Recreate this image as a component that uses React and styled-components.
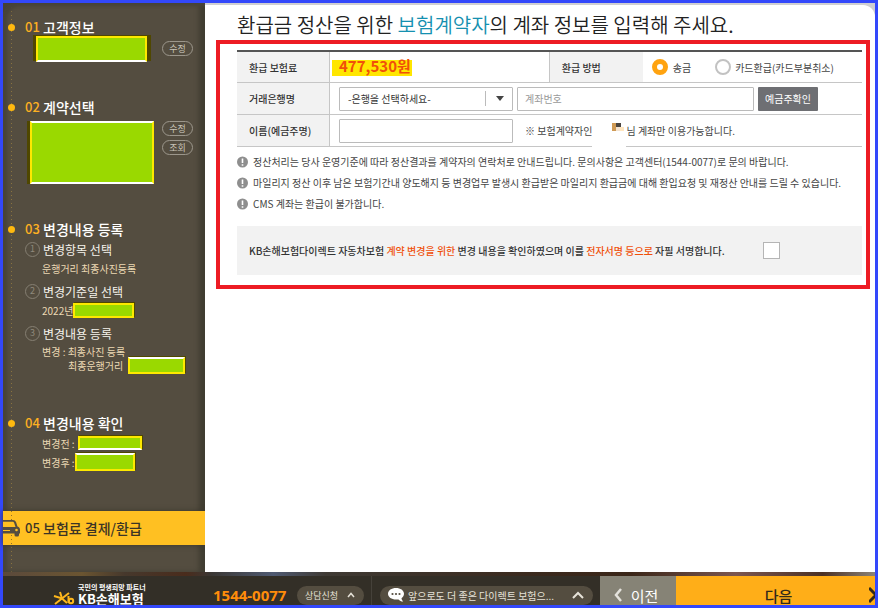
import React, { useState } from "react";
import styled, { createGlobalStyle } from "styled-components";

const GlobalStyle = createGlobalStyle`
  * {
    box-sizing: border-box;
  }
  body {
    margin: 0;
    font-family: "Noto Sans CJK KR", "Noto Sans", sans-serif;
    font-size: 10px;
    color: #444;
  }
  h1, h2, p, ol, ul {
    margin: 0;
    padding: 0;
  }
  ol, ul {
    list-style: none;
  }
  button, input, select {
    font-family: inherit;
    margin: 0;
  }
`;

const Page = styled.div`
  display: flex;
  flex-direction: column;
  min-height: 100vh;
  border: 3px solid #3348fb;
  background: #47423a;
`;

const Body = styled.div`
  display: flex;
  flex: 1;
`;

/* ---------- sidebar ---------- */

const Sidebar = styled.aside`
  flex: none;
  width: 202px;
  background: #454136;
`;

const SidebarInner = styled.div`
  height: 100%;
  padding-top: 15px;
  border-radius: 14px 0 0 0;
  background:
    repeating-linear-gradient(#8a7440 0 1px, transparent 1px 4px) 8px 0 / 1px 100% no-repeat,
    #544d40;
  box-shadow: inset 4px 3px 3px #48443a, inset -6px 0 5px #413d31;
`;

const Step = styled.li`
  display: grid;
  grid-template-columns: 7px 1fr;
  column-gap: 10px;
  padding: 0 12px ${(props) => props.$space}px 5px;
`;

const Bullet = styled.span`
  width: 7px;
  height: 7px;
  margin-top: 6px;
  border-radius: 50%;
  background: #ffb90f;
`;

const StepTitle = styled.h2`
  display: grid;
  grid-template-columns: 18px 1fr;
  font-size: 14px;
  font-weight: 500;
  line-height: 18px;
  color: ${(props) => (props.$active ? "#3b3426" : "#fff")};
`;

const StepNumber = styled.span`
  font-size: 13px;
  color: ${(props) => (props.$active ? "#3b3426" : "#fdb022")};
`;

const StepBody = styled.div`
  display: flex;
  justify-content: space-between;
  padding-top: ${(props) => props.$top}px;
  padding-left: ${(props) => props.$left}px;
`;

const Masked = styled.span`
  flex: none;
  width: ${(props) => props.$w}px;
  height: ${(props) => props.$h}px;
  border: 2px solid;
  border-color: ${(props) => props.$edge || "#fde800"};
  background: #9ad900;
  box-shadow: ${(props) => props.$shade || "1px -1px 0 #4f4700"};
`;

const Chips = styled.div`
  display: flex;
  flex-direction: column;
  gap: 4px;
  padding-top: ${(props) => props.$top || 0}px;
`;

const Chip = styled.button`
  width: 31px;
  height: 15px;
  padding: 0;
  border: 1px solid #9c978c;
  border-radius: 8px;
  background: transparent;
  font-size: 9px;
  line-height: 12px;
  color: #c9c4b8;
`;

const SubSteps = styled.ol`
  display: flex;
  flex-direction: column;
  gap: 8px;
  padding-top: 4px;
`;

const SubTitle = styled.p`
  display: grid;
  grid-template-columns: 15px 1fr;
  column-gap: 3px;
  margin-bottom: 2px;
  font-size: 12px;
  line-height: 16px;
  color: #f6f3ec;
`;

const SubNumber = styled.span`
  height: 15px;
  border: 1px solid #857f72;
  border-radius: 50%;
  font-size: 9px;
  line-height: 12px;
  text-align: center;
  color: #8f897c;
`;

const Detail = styled.p`
  display: flex;
  align-items: center;
  gap: ${(props) => props.$gap || 0}px;
  height: ${(props) => props.$h || 16}px;
  padding-left: ${(props) => props.$left || 17}px;
  white-space: nowrap;
  color: #ecd9b4;
`;

const Details = styled.div`
  display: flex;
  flex-direction: column;
  gap: 3px;
  padding-top: 3px;
`;

const ActiveStep = styled.li`
  display: grid;
  grid-template-columns: 17px 1fr;
  column-gap: 5px;
  align-items: center;
  height: 34px;
  background:
    repeating-linear-gradient(#8f6f2a 0 1px, transparent 1px 4px) 8px 0 / 1px 100% no-repeat,
    #ffc022;
  box-shadow: 0 0 5px #3a362c;
`;

/* ---------- main ---------- */

const MainArea = styled.div`
  flex: 1;
  min-width: 0;
  padding-top: 2px;
  background: #cfcfd1;
`;

const Main = styled.main`
  height: 100%;
  padding: 5px 5px 0 11px;
  border-radius: 0 12px 0 0;
  background: #fff;
`;

const Title = styled.h1`
  padding-left: 21px;
  font-size: 20px;
  font-weight: 350;
  line-height: 30px;
  white-space: nowrap;
  color: #222;
`;

const TitleAccent = styled.span`
  color: #1590b0;
`;

const Frame = styled.form`
  padding: 6px 4px 10px 17px;
  border: 4px solid #ed1c24;
`;

const Table = styled.table`
  width: 100%;
  border-top: 2px solid #555;
  border-spacing: 0;
  table-layout: fixed;
`;

const HeadCell = styled.th`
  padding: 0 0 0 12px;
  border-bottom: 1px solid #c6c6c6;
  border-right: ${(props) => (props.$divided ? "0" : "1px solid #c6c6c6")};
  border-left: ${(props) => (props.$divided ? "1px solid #c6c6c6" : "0")};
  background: #f2f2f2;
  font-weight: 500;
  text-align: left;
  color: #333;
`;

const Cell = styled.td`
  padding: 0 0 0 ${(props) => (props.$flush ? 2 : 9)}px;
  border-bottom: 1px solid #c6c6c6;
`;

const Field = styled.div`
  display: flex;
  align-items: center;
  gap: 4px;
  height: ${(props) => props.$h || 31}px;
  padding-right: ${(props) => props.$right || 0}px;
`;

const Amount = styled.strong`
  display: block;
  width: fit-content;
  margin-bottom: 2px;
  padding: 0 1px 0 7px;
  background: linear-gradient(transparent 5px, #ffe600 5px 21px, transparent 21px);
  font-size: 15px;
  font-weight: 700;
  line-height: 22px;
  color: #f0500a;
`;

const RadioLabel = styled.label`
  display: flex;
  align-items: center;
  gap: ${(props) => props.$gap || 5}px;
  margin-right: 20px;
  white-space: nowrap;
  color: #444;
`;

const Radio = styled.input`
  appearance: none;
  width: 16px;
  height: 16px;
  border: 2px solid #c2c2c2;
  border-radius: 50%;
  background: #fff;

  &:checked {
    border: 5px solid #ffa310;
  }
`;

const SelectWrap = styled.div`
  display: grid;
  grid-template-columns: 1fr 28px;
  flex: none;
  width: 174px;
`;

const Select = styled.select`
  grid-area: 1 / 1 / 2 / 3;
  appearance: none;
  width: 100%;
  height: 24px;
  padding: 0 8px;
  border: 1px solid #bbb;
  border-radius: 1px;
  background: #fff;
  font-size: 10px;
  color: #333;
`;

const SelectArrow = styled.span`
  grid-area: 1 / 2 / 2 / 3;
  align-self: center;
  display: flex;
  align-items: center;
  justify-content: center;
  height: 15px;
  border-left: 1px solid #bbb;
  pointer-events: none;
`;

const TextInput = styled.input`
  flex: ${(props) => (props.$wide ? "1" : "none")};
  width: 174px;
  min-width: 0;
  height: 24px;
  padding: 0 7px;
  border: 1px solid #bbb;
  border-radius: 1px;
  font-size: 10px;
  color: #333;

  &::placeholder {
    color: #999;
  }
`;

const CheckButton = styled.button`
  flex: none;
  width: 60px;
  height: 24px;
  padding: 0;
  border: 0;
  border-radius: 1px;
  background: #6e6f73;
  font-size: 10px;
  color: #fff;
`;

const Note = styled.p`
  display: flex;
  align-items: center;
  height: 31px;
  padding-left: 8px;
  white-space: nowrap;
`;

/* runs over the row line on purpose, the name is blanked out down to it */
const NameMask = styled.span`
  display: flex;
  justify-content: flex-end;
  width: 34px;
  height: 33px;
  margin-bottom: -2px;
  padding: 8px 2px 0 0;
  background: #fff;
`;

const Notices = styled.ul`
  padding: 4px 0 12px;
`;

const Notice = styled.li`
  display: flex;
  align-items: center;
  gap: 5px;
  height: 21px;
  white-space: nowrap;
  color: #444;
`;

const Agreement = styled.div`
  display: flex;
  align-items: center;
  gap: 38px;
  height: 49px;
  padding-left: 12px;
  background: #f2f2f2;
  font-weight: 500;
  white-space: nowrap;
  color: #333;
`;

const Point = styled.span`
  color: #f0500a;
`;

const Checkbox = styled.input`
  appearance: none;
  width: 17px;
  height: 17px;
  border: 1px solid #b5b5b5;
  background: #fff;

  &:checked {
    background: #ffa310;
  }
`;

/* ---------- footer ---------- */

const Footer = styled.footer`
  height: 33px;
  overflow: hidden;
  background: #332f27;
`;

const PhotoStrip = styled.div`
  height: 4px;
  background: linear-gradient(
    90deg, #5b4a3c, #6b5531 9%, #46382c 14%, #4a2c1c 21%, #3b3835 24%,
    #4f5a72 31%, #3f3a34 37%, #3b2a1e 60%, #3a2618 72%, #7c5650 84%, #4b3024 94%, #8c8378
  );
`;

const FooterRow = styled.div`
  display: flex;
  align-items: center;
  height: 38px;
`;

const Logo = styled.a`
  display: grid;
  grid-template-columns: 23px auto;
  column-gap: 2px;
  flex: none;
  width: 202px;
  padding-left: 50px;
  text-decoration: none;
  color: #fff;
`;

const LogoText = styled.span`
  display: flex;
  flex-direction: column;
  font-size: 13px;
  font-weight: 700;
  line-height: 16px;
`;

const LogoTagline = styled.span`
  font-size: 7px;
  line-height: 8px;
`;

const Phone = styled.a`
  width: 92px;
  padding-left: 8px;
  font-family: "Noto Sans", sans-serif;
  font-size: 15px;
  font-weight: 700;
  text-decoration: none;
  color: #ff8d0a;
`;

const Pill = styled.button`
  display: flex;
  align-items: center;
  gap: 4px;
  flex: none;
  width: ${(props) => props.$w}px;
  height: 19px;
  padding: 0 9px 0 8px;
  border: 0;
  border-radius: 10px;
  background: #544d40;
  font-size: ${(props) => props.$size}px;
  white-space: nowrap;
  color: #e6e2d8;
`;

const PillText = styled.span`
  flex: 1;
  text-align: left;
`;

const Divider = styled.span`
  width: 1px;
  height: 38px;
  margin: 0 8px 0 7px;
  background: #45413a;
`;

const NavButton = styled.button`
  display: flex;
  align-items: center;
  justify-content: center;
  gap: 8px;
  align-self: stretch;
  border: 0;
  padding: 0;
  font-size: 15px;
`;

const PrevButton = styled(NavButton)`
  width: 76px;
  margin-left: 7px;
  padding-right: 4px;
  background: #868376;
  color: #fff;
`;

const NextButton = styled(NavButton)`
  flex: 1;
  display: grid;
  grid-template-columns: 1fr 6px;
  gap: 0;
  padding-left: 12px;
  background: #ffae18;
  font-weight: 500;
  color: #33291a;
`;

const CarIcon = () => (
  <svg width="17" height="18" viewBox="0 0 17 18" aria-hidden="true">
    <path fill="#544d40" d="M0 1h10q2 0 3 2l1.500 4.500Q17 8 17 11v3.500H0z" />
    <path fill="#ffc022" d="M0 2.800h9.800q.9 0 1.300 1L12.500 8H0z" />
    <rect x="11.500" y="12" width="4.500" height="5.500" rx="1.500" fill="#544d40" />
    <circle cx="13.500" cy="11" r="1.300" fill="#ffc022" />
    <path fill="#ffc022" d="M0 11h7v1H0z" />
  </svg>
);

const AlertIcon = () => (
  <svg width="11" height="12" viewBox="0 0 11 12" aria-hidden="true">
    <circle cx="5.500" cy="6" r="5.500" fill="#8e8e8e" />
    <path d="M5.500 2.500v4.500M5.500 8.200v1.500" stroke="#fff" strokeWidth="1.600" />
  </svg>
);

const Chevron = ({ d, w, h, color, stroke }) => (
  <svg width={w} height={h} viewBox={`0 0 ${w} ${h}`} fill="none" aria-hidden="true">
    <path d={d} stroke={color} strokeWidth={stroke} />
  </svg>
);

const ChatIcon = () => (
  <svg width="16" height="14" viewBox="0 0 16 14" aria-hidden="true">
    <path
      fill="#fff"
      d="M8 0c4.400 0 8 2.400 8 5.800 0 1.800-1 3.400-2.500 4.400.1 1.300.8 2.400 1.700 3.300-2-.1-3.600-.9-4.700-2.100-.8.100-1.600.2-2.500.2-4.400 0-8-2.400-8-5.800S3.600 0 8 0z"
    />
    <circle cx="4.500" cy="6" r="1.100" fill="#544d40" />
    <circle cx="8" cy="6" r="1.100" fill="#544d40" />
    <circle cx="11.500" cy="6" r="1.100" fill="#544d40" />
  </svg>
);

const StarMark = () => (
  <svg width="23" height="24" viewBox="0 0 23 24" fill="none" aria-hidden="true">
    <g stroke="#ffb81c" strokeWidth="2">
      <path d="M1 13 9 15.500 16 10" />
      <path d="M7 9 9 15.500 2 21" />
      <path d="M9 15.500 14 20" />
      <path d="M15.500 13v7" />
      <circle cx="18" cy="18" r="2.200" />
    </g>
  </svg>
);

const NOTICES = [
  "정산처리는 당사 운영기준에 따라 정산결과를 계약자의 연락처로 안내드립니다. 문의사항은 고객센터(1544-0077)로 문의 바랍니다.",
  "마일리지 정산 이후 남은 보험기간내 양도해지 등 변경업무 발생시 환급받은 마일리지 환급금에 대해 환입요청 및 재정산 안내를 드릴 수 있습니다.",
  "CMS 계좌는 환급이 불가합니다.",
];

const Heading = ({ number, children, active }) => (
  <StepTitle $active={active}>
    <StepNumber $active={active}>{number}</StepNumber>
    {children}
  </StepTitle>
);

const StepList = () => (
  <Sidebar>
    <SidebarInner>
      <ol>
        <Step $space={36}>
          <Bullet />
          <div>
            <Heading number="01">고객정보</Heading>
            <StepBody $top={0} $left={11}>
              <Masked
                $w={111}
                $h={26}
                $edge="#fde800 #fde800 #fff"
                $shade="-3px -1px 0 #4f4700, 4px -1px 0 #4f4700"
              />
              <Chips $top={5}>
                <Chip type="button">수정</Chip>
              </Chips>
            </StepBody>
          </div>
        </Step>
        <Step $space={36}>
          <Bullet />
          <div>
            <Heading number="02">계약선택</Heading>
            <StepBody $top={5} $left={5}>
              <Masked
                $w={124}
                $h={63}
                $edge="#fff #fde800 #fff #fde800"
                $shade="-3px 0 0 #4f4700"
              />
              <Chips>
                <Chip type="button">수정</Chip>
                <Chip type="button">조회</Chip>
              </Chips>
            </StepBody>
          </div>
        </Step>
        <Step $space={42}>
          <Bullet />
          <div>
            <Heading number="03">변경내용 등록</Heading>
            <SubSteps>
              <li>
                <SubTitle><SubNumber>1</SubNumber>변경항목 선택</SubTitle>
                <Detail>운행거리 최종사진등록</Detail>
              </li>
              <li>
                <SubTitle><SubNumber>2</SubNumber>변경기준일 선택</SubTitle>
                <Detail>2022년<Masked $w={61} $h={15} /></Detail>
              </li>
              <li>
                <SubTitle><SubNumber>3</SubNumber>변경내용 등록</SubTitle>
                <Detail $h={14}>변경 : 최종사진 등록</Detail>
                <Detail $h={14} $left={43} $gap={5}>
                  최종운행거리
                  <Masked $w={57} $h={17} $edge="#fff #fde800 #fde800" />
                </Detail>
              </li>
            </SubSteps>
          </div>
        </Step>
        <Step $space={41}>
          <Bullet />
          <div>
            <Heading number="04">변경내용 확인</Heading>
            <Details>
              <Detail $gap={3}>변경전 :<Masked $w={64} $h={14} $edge="#fde800 #fde800 #fff" /></Detail>
              <Detail>변경후 :<Masked $w={60} $h={18} $edge="#fff #fde800 #fde800" /></Detail>
            </Details>
          </div>
        </Step>
        <ActiveStep>
          <CarIcon />
          <Heading number="05" active>보험료 결제/환급</Heading>
        </ActiveStep>
      </ol>
    </SidebarInner>
  </Sidebar>
);

const RefundForm = () => {
  const [method, setMethod] = useState("transfer");

  return (
    <Frame onSubmit={(e) => e.preventDefault()}>
      <Table>
        <colgroup>
          <col style={{ width: "93px" }} />
          <col style={{ width: "35%" }} />
          <col style={{ width: "94px" }} />
          <col />
        </colgroup>
        <tbody>
          <tr>
            <HeadCell scope="row">환급 보험료</HeadCell>
            <Cell $flush><Amount>477,530원</Amount></Cell>
            <HeadCell scope="row" $divided>환급 방법</HeadCell>
            <Cell>
              <Field $h={30}>
                <RadioLabel>
                  <Radio
                    type="radio"
                    name="method"
                    checked={method === "transfer"}
                    onChange={() => setMethod("transfer")}
                  />
                  송금
                </RadioLabel>
                <RadioLabel $gap={4}>
                  <Radio
                    type="radio"
                    name="method"
                    checked={method === "card"}
                    onChange={() => setMethod("card")}
                  />
                  카드환급(카드부분취소)
                </RadioLabel>
              </Field>
            </Cell>
          </tr>
          <tr>
            <HeadCell scope="row"><label htmlFor="bank">거래은행명</label></HeadCell>
            <Cell colSpan={3}>
              <Field $right={44}>
                <SelectWrap>
                  <Select id="bank">
                    <option>-은행을 선택하세요-</option>
                  </Select>
                  <SelectArrow>
                    <svg width="8" height="5" viewBox="0 0 8 5" aria-hidden="true">
                      <path d="M0 0h8L4 5z" fill="#444" />
                    </svg>
                  </SelectArrow>
                </SelectWrap>
                <TextInput $wide type="text" placeholder="계좌번호" aria-label="계좌번호" />
                <CheckButton type="button">예금주확인</CheckButton>
              </Field>
            </Cell>
          </tr>
          <tr>
            <HeadCell scope="row"><label htmlFor="holder">이름(예금주명)</label></HeadCell>
            <Cell colSpan={3}>
              <Field>
                <TextInput id="holder" type="text" />
                <Note>
                  ※ 보험계약자인
                  <NameMask>
                    <svg width="12" height="9" viewBox="0 0 12 9" aria-hidden="true">
                      <path d="M0 0h4v8H0z" fill="#cf9a55" />
                      <path d="M4 0h5v4H4z" fill="#4a4540" />
                      <path d="M4 4h4v4H4z" fill="#f4e3cf" />
                      <path d="M8 4h4v4H8z" fill="#ffe6c0" />
                    </svg>
                  </NameMask>
                  님 계좌만 이용가능합니다.
                </Note>
              </Field>
            </Cell>
          </tr>
        </tbody>
      </Table>
      <Notices>
        {NOTICES.map((text) => (
          <Notice key={text}>
            <AlertIcon />
            {text}
          </Notice>
        ))}
      </Notices>
      <Agreement>
        <label htmlFor="agree">
          KB손해보험다이렉트 자동차보험 <Point>계약 변경을 위한</Point> 변경 내용을 확인하였으며 이를{" "}
          <Point>전자서명 등으로</Point> 자필 서명합니다.
        </label>
        <Checkbox id="agree" type="checkbox" />
      </Agreement>
    </Frame>
  );
};

const BottomBar = () => (
  <Footer>
    <PhotoStrip />
    <FooterRow>
      <Logo href="#">
        <StarMark />
        <LogoText>
          <LogoTagline>국민의 평생희망 파트너</LogoTagline>
          KB손해보험
        </LogoText>
      </Logo>
      <Phone href="tel:1544-0077">1544-0077</Phone>
      <Pill type="button" $w={67} $size={9}>
        <PillText>상담신청</PillText>
        <Chevron w={8} h={6} d="M1 5 4 1.500 7 5" color="#e6e2d8" stroke={1.500} />
      </Pill>
      <Divider />
      <Pill type="button" $w={213} $size={10}>
        <ChatIcon />
        <PillText>앞으로도 더 좋은 다이렉트 보험으...</PillText>
        <Chevron w={12} h={8} d="M1 7 6 2 11 7" color="#e6e2d8" stroke={2} />
      </Pill>
      <PrevButton type="button">
        <Chevron w={9} h={14} d="M7 1 2 7 7 13" color="#e4e2dc" stroke={2.500} />
        이전
      </PrevButton>
      <NextButton type="button">
        다음
        <Chevron w={6} h={16} d="M0 1 7 8 0 15" color="#33291a" stroke={3} />
      </NextButton>
    </FooterRow>
  </Footer>
);

const App = () => (
  <>
    <GlobalStyle />
    <Page>
      <Body>
        <StepList />
        <MainArea>
          <Main>
            <Title>
              환급금 정산을 위한 <TitleAccent>보험계약자</TitleAccent>의 계좌 정보를 입력해 주세요.
            </Title>
            <RefundForm />
          </Main>
        </MainArea>
      </Body>
      <BottomBar />
    </Page>
  </>
);

export default App;
